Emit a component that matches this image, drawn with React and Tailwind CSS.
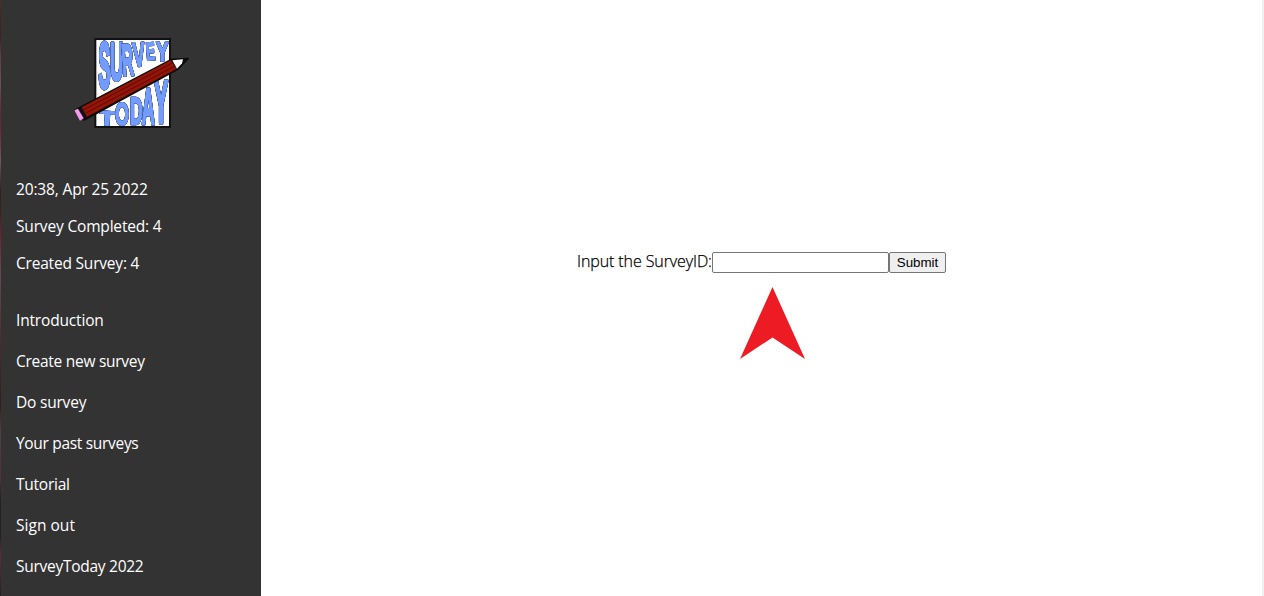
const letters = [
  // character, left, top, width, height, rotation
  ['S', 102, 46, 32, 134, 0],
  ['U', 139, 45, 33, 112, 0],
  ['R', 175, 50, 31, 92, -4],
  ['V', 206, 44, 36, 70, -4],
  ['E', 247, 44, 23, 52, -4],
  ['Y', 274, 40, 36, 58, 0],
  ['T', 103, 250, 45, 42, 4],
  ['O', 152, 226, 38, 64, 0],
  ['D', 197, 210, 33, 78, 0],
  ['A', 231, 186, 38, 102, 0],
  ['Y', 268, 160, 40, 126, 0],
];

const inkWidth = { S: 60, U: 59, R: 64, V: 66, E: 56, Y: 63, T: 57, O: 70, D: 61, A: 70 };

function Letter({ item }) {
  const [ch, x, y, w, h, rot] = item;
  const sx = w / inkWidth[ch];
  const sy = h / 69;
  return (
    <text
      transform={`translate(${x + w / 2} ${y + h}) rotate(${rot}) scale(${sx} ${sy})`}
      textAnchor="middle"
      fontFamily="'Liberation Sans', sans-serif"
      fontWeight="700"
      fontSize="100"
      fill="#739cff"
      stroke="#739cff"
      strokeWidth="6"
      strokeLinejoin="round"
    >
      {ch}
    </text>
  );
}

function Logo() {
  return (
    <svg className="block h-[110px] w-[135px]" viewBox="0 0 405 330" role="img" aria-label="Survey Today">
      <rect x="91" y="33" width="224" height="264" fill="#fff" stroke="#111" strokeWidth="6" />
      {letters.map((item, i) => (
        <g key={i} className="[filter:drop-shadow(0_0_2px_#14204a)_drop-shadow(0_0_1px_#14204a)]">
          <Letter item={item} />
        </g>
      ))}
      <path d="M321 94 369 92 338 124 58 276 29 247Z" fill="#111" stroke="#0c0c0c" strokeWidth="5" strokeLinejoin="round" />
      <path d="M322 97 354 94 351 106 336 122Z" fill="#fff" />
      <path d="M50 238 317 97 334 123 66 266Z" fill="#941505" />
      <path d="M55 246 322 105M61 256 328 115" stroke="#5c0903" strokeWidth="3" fill="none" />
      <path d="M28 247 39 242 56 271 45 278Z" fill="#f59aea" />
    </svg>
  );
}

const stats = [
  ['20:38, Apr 25 2022', 'tracking-[-0.15px]'],
  ['Survey Completed: 4', 'tracking-[-0.17px]'],
  ['Created Survey: 4', 'tracking-[-0.2px]'],
];

const links = [
  ['Introduction', 'tracking-[-0.17px]'],
  ['Create new survey', 'tracking-[-0.27px]'],
  ['Do survey', 'tracking-[-0.2px]'],
  ['Your past surveys', 'tracking-[-0.31px]'],
  ['Tutorial', 'tracking-[-0.25px]'],
  ['Sign out', 'tracking-[0.03px]'],
  ['SurveyToday 2022', 'tracking-[-0.27px]'],
];

export default function App() {
  return (
    <div className="flex h-[596px] w-[1264px] overflow-hidden bg-white font-['Open_Sans','Noto_Sans',sans-serif] text-[15.5px]">
      <div className="w-px shrink-0 bg-[linear-gradient(#4a3026_0%,#3a2020_6%,#5f3a42_9%,#6a5358_14%,#5c2c38_19%,#70283a_22%,#6a5a5e_27%,#32201e_32%,#3a241c_36%,#702033_39%,#624c52_46%,#4e2832_58%,#2e2018_68%,#4c4044_72%,#54303c_80%,#242024_84%,#222_90%,#58303e_93%,#282024_100%)]" />
      <aside className="flex w-[260px] shrink-0 flex-col bg-[#333] pl-[15px] text-white">
        <div className="pt-7 pl-[49px]">
          <Logo />
        </div>
        <div className="mt-[33px] flex flex-col">
          {stats.map(([label, tracking]) => (
            <p key={label} className={`h-[37px] leading-[37px] whitespace-nowrap ${tracking}`}>{label}</p>
          ))}
        </div>
        <nav className="mt-[18px] flex flex-col">
          {links.map(([label, tracking]) => (
            <a key={label} href="#" className={`h-[41px] leading-[41px] whitespace-nowrap ${tracking}`}>{label}</a>
          ))}
        </nav>
      </aside>
      <main className="flex flex-1 flex-col pt-[251px] pl-[316px]">
        <form className="flex h-[22px] items-center text-black" onSubmit={(e) => e.preventDefault()}>
          <label htmlFor="survey-id" className="w-[135px] shrink-0 pb-px text-base leading-[21px] font-light tracking-[-0.1px] whitespace-nowrap [-webkit-text-stroke:0.25px_black]">Input the SurveyID:</label>
          <input id="survey-id" className="mt-px h-[21px] w-[177px] rounded-[2px] border border-[#767676] bg-white px-1 outline-none" />
          <button className="mt-px h-[21px] w-[57px] rounded-[2px] border border-[#767676] bg-[#efefef] text-center font-['Liberation_Sans',sans-serif] text-[13.33px] leading-[19px]">Submit</button>
        </form>
        <svg className="mt-[14px] ml-[162px] h-[73px] w-[67px]" viewBox="0 0 67 73" aria-hidden="true">
          <path d="M33.5 0 66 72 33.5 50.500 1 72Z" fill="#ed1c24" />
        </svg>
      </main>
      <div className="w-0.5 shrink-0 bg-[#f1f1f1]" />
    </div>
  );
}
